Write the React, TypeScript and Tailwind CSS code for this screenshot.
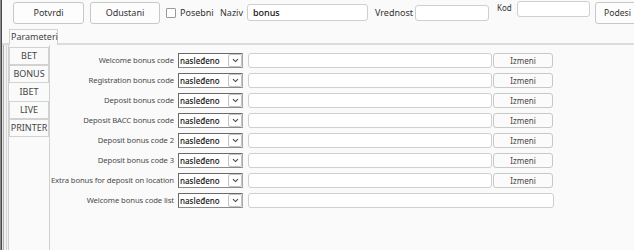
import React from 'react';

const rows: { label: string; button: boolean }[] = [
  { label: 'Welcome bonus code', button: true },
  { label: 'Registration bonus code', button: true },
  { label: 'Deposit bonus code', button: true },
  { label: 'Deposit BACC bonus code', button: true },
  { label: 'Deposit bonus code 2', button: true },
  { label: 'Deposit bonus code 3', button: true },
  { label: 'Extra bonus for deposit on location', button: true },
  { label: 'Welcome bonus code list', button: false },
];

const sideTabs = ['BET', 'BONUS', 'IBET', 'LIVE', 'PRINTER'];

const Chevron = () => (
  <svg width="7" height="5" viewBox="0 0 7 5" fill="none">
    <path d="M1 1.2 L3.5 3.6 L6 1.2" stroke="#444" strokeWidth="1.1" />
  </svg>
);

const Select = () => (
  <div className="flex h-[15px] w-[65px] shrink-0 border border-[#6a6a6a] border-r-[#a8a8a8] border-b-[#8a8a8a] bg-white">
    <div className="flex-1 pl-[1px] text-[8px] leading-[13px] font-medium text-[#111]">nasleđeno</div>
    <div className="flex w-[14px] items-center justify-center rounded-[2px] border border-[#c4c4c4] bg-[#fdfdfd]">
      <Chevron />
    </div>
  </div>
);

export default function App() {
  return (
    <div className="flex h-[250px] w-[634px] overflow-hidden bg-[#fafafa] font-['Noto_Sans',sans-serif] text-[#333]">
      <div className="w-px bg-[#8a8a8a]" />
      <div className="w-px bg-[#4a4a4a]" />
      <div className="flex min-w-0 flex-1 flex-col overflow-hidden">
        {/* toolbar */}
        <div className="flex h-[28px] shrink-0 items-start pl-[11px] [&>*]:shrink-0">
          <button className="mt-[2px] h-[22px] w-[71px] rounded-[3px] border border-[#c8c8c8] bg-[#fdfdfd] text-[9px] text-[#333]">
            Potvrdi
          </button>
          <button className="ml-[6px] mt-[2px] h-[22px] w-[70px] rounded-[3px] border border-[#c8c8c8] bg-[#fdfdfd] text-[9px] text-[#333]">
            Odustani
          </button>
          <div className="ml-[6px] mt-[8px] h-[10px] w-[10px] rounded-[1px] border border-[#9a9a9a] bg-white" />
          <span className="ml-[4px] mt-[6px] w-[32px] text-[9px] leading-[13px] whitespace-nowrap">Posebni</span>
          <span className="ml-[8px] mt-[6px] w-[24px] text-[9px] leading-[13px] whitespace-nowrap">Naziv</span>
          <div className="ml-[3px] mt-[4px] h-[17px] w-[121px] rounded-[3px] border border-[#cfcfcf] bg-white pl-[5px] text-[9px] leading-[15px] font-medium text-[#111]">
            bonus
          </div>
          <span className="ml-[7px] mt-[6px] w-[37px] text-[9px] leading-[13px] whitespace-nowrap">Vrednost</span>
          <div className="ml-[3px] mt-[5px] h-[16px] w-[74px] rounded-[3px] border border-[#cfcfcf] bg-white" />
          <span className="ml-[8px] mt-[2px] w-[14px] text-[8px] leading-[12px] whitespace-nowrap">Kod</span>
          <div className="ml-[6px] mt-[1px] h-[16px] w-[73px] rounded-[3px] border border-[#cfcfcf] bg-white" />
          <button className="ml-[5px] mt-[2px] h-[22px] w-[60px] rounded-[3px] border border-[#c8c8c8] bg-[#fdfdfd] pl-[8px] text-left text-[8.6px] whitespace-nowrap text-[#333]">
            Podesi
          </button>
        </div>

        {/* tab header */}
        <div className="flex h-[17px] shrink-0 items-end">
          <div className="h-full w-[7px] border-b-2 border-[#dcdcdc]" />
          <div className="h-[16px] w-[49px] border border-b-0 border-[#d2d2d2] bg-[#fafafa] pl-[1px] text-[9px] leading-[14px] whitespace-nowrap text-[#444]">
            Parameteri
          </div>
          <div className="h-full flex-1 border-b-2 border-[#dcdcdc]" />
        </div>

        {/* body */}
        <div className="flex min-h-0 flex-1">
          <div className="w-px bg-[#e4e4e4]" />
          <div className="w-px bg-[#b0b0b0]" />
          <div className="w-[2px] bg-[#f2f2f2]" />
          <div className="w-px bg-[#d6d6d6]" />
          <div className="w-px bg-[#f2f2f2]" />
          <div className="w-px bg-[#cfcfcf]" />

          {/* side tabs */}
          <div className="flex w-[41px] shrink-0 flex-col border-r border-[#d0d0d0] pt-[2px]">
            {sideTabs.map((t) => (
              <div
                key={t}
                className={
                  t === 'IBET'
                    ? 'h-[18px] w-[40px] text-center text-[9px] leading-[18px] text-[#444]'
                    : 'h-[18px] w-[40px] border border-[#d2d2d2] bg-[#fafafa] text-center text-[9px] leading-[16px] text-[#444]'
                }
              >
                {t}
              </div>
            ))}
          </div>

          {/* panel */}
          <div className="flex flex-1 flex-col pt-[8px]">
            {rows.map((r) => (
              <div key={r.label} className="mb-[5px] flex h-[15px] items-center">
                <div className="w-[128px] shrink-0 pr-[4px] text-right text-[7.7px] leading-[15px] tracking-[-0.1px] whitespace-nowrap text-[#4a4a4a]">
                  {r.label}
                </div>
                <Select />
                {r.button ? (
                  <>
                    <div className="ml-[5px] h-[15px] w-[244px] shrink-0 rounded-[3px] border border-[#cfcfcf] bg-white" />
                    <button className="ml-[1px] h-[15px] w-[60px] shrink-0 rounded-[3px] border border-[#c8c8c8] bg-[#fbfbfb] text-[8px] leading-[13px] text-[#444]">
                      Izmeni
                    </button>
                  </>
                ) : (
                  <div className="ml-[5px] h-[15px] w-[306px] shrink-0 rounded-[3px] border border-[#cfcfcf] bg-white" />
                )}
              </div>
            ))}
          </div>
        </div>
      </div>
    </div>
  );
}
